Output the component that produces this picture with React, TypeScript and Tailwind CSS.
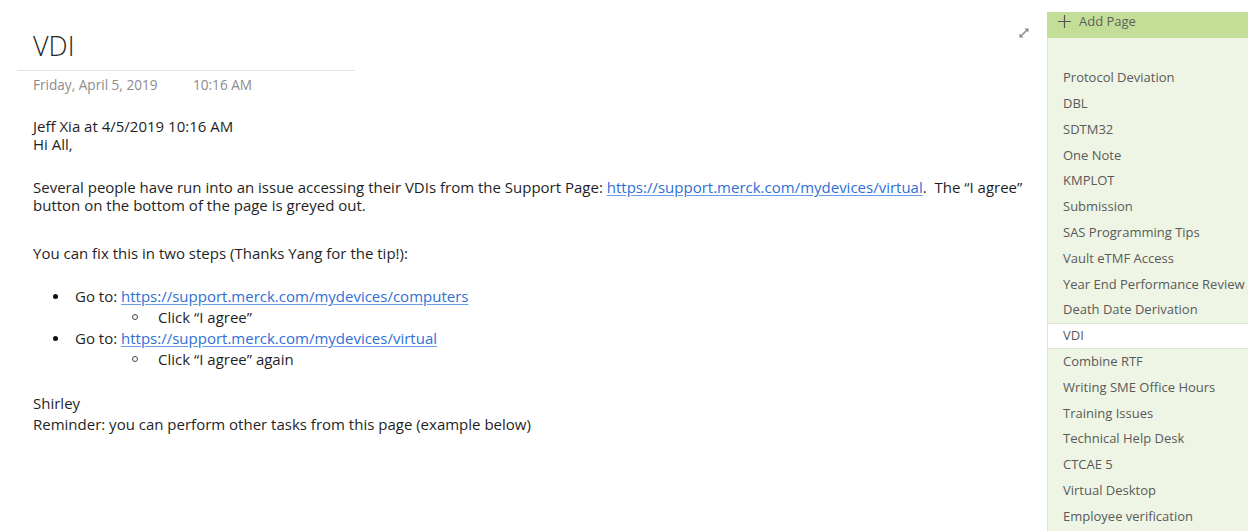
import React from 'react';

const pages = [
  'Protocol Deviation',
  'DBL',
  'SDTM32',
  'One Note',
  'KMPLOT',
  'Submission',
  'SAS Programming Tips',
  'Vault eTMF Access',
  'Year End Performance Review',
  'Death Date Derivation',
  'VDI',
  'Combine RTF',
  'Writing SME Office Hours',
  'Training Issues',
  'Technical Help Desk',
  'CTCAE 5',
  'Virtual Desktop',
  'Employee verification',
];

function Link({ href }: { href: string }) {
  return <a href={href} className="text-[#2f6fd6] underline underline-offset-2 decoration-[#6a9be6]">{href}</a>;
}

function ExpandIcon() {
  return (
    <svg width="14" height="14" viewBox="0 0 14 14" className="text-[#8a8a8a]">
      <path d="M3 11 L11 3" stroke="currentColor" strokeWidth="1.6" />
      <path d="M7.5 2.5 H11.5 V6.5 Z" fill="currentColor" />
      <path d="M2.5 7.5 V11.5 H6.5 Z" fill="currentColor" />
    </svg>
  );
}

function Step({ url }: { url: string }) {
  return (
    <li className="flex items-center">
      <span className="ml-[20px] w-[5px] h-[5px] rounded-full bg-[#111]" />
      <span className="ml-[17px]">Go to: <Link href={url} /></span>
    </li>
  );
}

function SubStep({ text }: { text: string }) {
  return (
    <li className="flex items-center">
      <span className="ml-[99px] w-[6px] h-[6px] rounded-full border border-[#444]" />
      <span className="ml-[20px]">{text}</span>
    </li>
  );
}

export default function App() {
  return (
    <div className="w-[1248px] h-[531px] bg-white flex overflow-hidden" style={{ fontFamily: '"Open Sans", Lato, sans-serif' }}>
      {/* note body */}
      <div className="flex-1 relative">
        <div className="absolute right-[16px] top-[26px]">
          <ExpandIcon />
        </div>
        <div className="pt-[28px] pl-[17px]">
          <div className="w-[338px] border-b border-[#e3e3e3] pl-[16px] pb-[6px]">
            <h1 className="text-[27px] leading-[36px] font-light text-[#262626]">VDI</h1>
          </div>
          <div className="pl-[16px] mt-[5px] flex text-[13.6px] leading-[18px] text-[#8c8c8c]">
            <span className="w-[160px]">Friday, April 5, 2019</span>
            <span>10:16 AM</span>
          </div>
          <div className="pl-[16px] mt-[23px] text-[15px] leading-[18px] text-[#1f1f1f]">
            <p>Jeff Xia at 4/5/2019 10:16 AM</p>
            <p>Hi All,</p>
            <p className="mt-[25px] w-[1010px]">
              Several people have run into an issue accessing their VDIs from the Support Page:{' '}
              <Link href="https://support.merck.com/mydevices/virtual" />.&nbsp; The “I agree” button on the bottom of the page is greyed out.
            </p>
            <p className="mt-[30px]">You can fix this in two steps (Thanks Yang for the tip!):</p>
            <ul className="mt-[25px] flex flex-col gap-[3px]">
              <Step url="https://support.merck.com/mydevices/computers" />
              <SubStep text="Click “I agree”" />
              <Step url="https://support.merck.com/mydevices/virtual" />
              <SubStep text="Click “I agree” again" />
            </ul>
            <p className="mt-[26px]">Shirley</p>
            <p className="mt-[3px]">Reminder: you can perform other tasks from this page (example below)</p>
          </div>
        </div>
      </div>

      {/* page list */}
      <div className="w-[201px] pt-[12px] flex flex-col">
        <div className="h-[26px] bg-[#c3de97] flex items-start pl-[11px] gap-[8px] text-[13px] leading-[18px] text-[#5f5f5f]">
          <svg width="13" height="13" viewBox="0 0 13 13" className="mt-[3px]">
            <path d="M6.5 0 V13 M0 6.5 H13" stroke="#555" strokeWidth="1.2" />
          </svg>
          <span>Add Page</span>
        </div>
        <div className="flex-1 bg-[#eef5e4] border-l border-[#dde6d1] pt-[27px]">
          {pages.map((p) => (
            <div
              key={p}
              className={
                p === 'VDI'
                  ? 'h-[25.8px] flex items-center pl-[15px] bg-white border-y border-[#dbe9c8] text-[13px] text-[#5a5a5a] whitespace-nowrap'
                  : 'h-[25.8px] flex items-center pl-[15px] text-[13px] text-[#5a5a5a] whitespace-nowrap'
              }
            >
              {p}
            </div>
          ))}
        </div>
      </div>
    </div>
  );
}
